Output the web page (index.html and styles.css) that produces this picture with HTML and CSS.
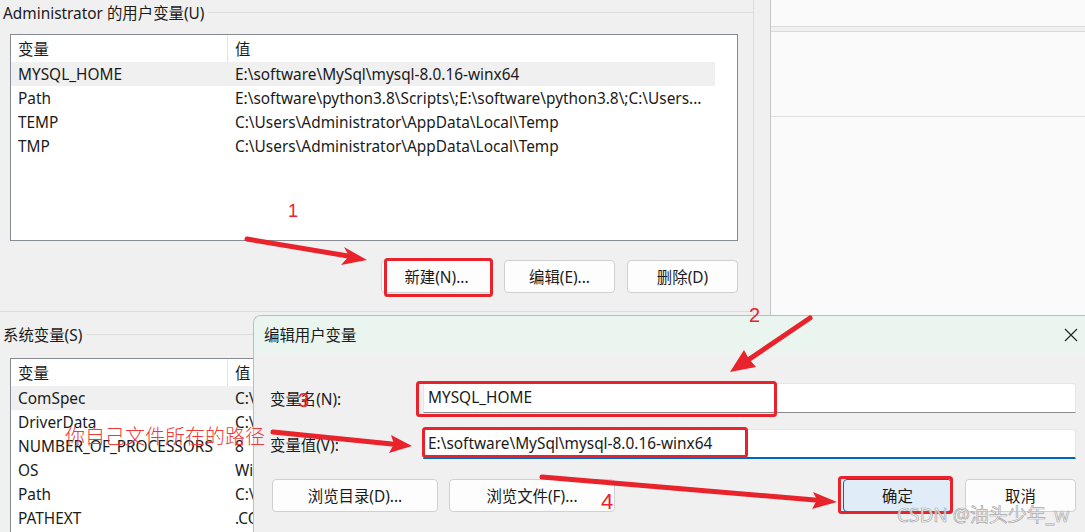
FILE: index.html
```html
<!DOCTYPE html>
<html lang="zh-CN">
<head>
    <meta charset="UTF-8">
    <title>环境变量</title>
    <link rel="stylesheet" href="styles.css">
</head>
<body>
<div class="screen">

    <div class="env">
        <section class="group user">
            <div class="legend"><span>Administrator 的用户变量(U)</span><i></i></div>
            <div class="list">
                <div class="row head"><div class="c1">变量</div><div class="c2">值</div></div>
                <div class="row sel"><div class="c1">MYSQL_HOME</div><div class="c2">E:\software\MySql\mysql-8.0.16-winx64</div></div>
                <div class="row"><div class="c1">Path</div><div class="c2">E:\software\python3.8\Scripts\;E:\software\python3.8\;C:\Users...</div></div>
                <div class="row"><div class="c1">TEMP</div><div class="c2">C:\Users\Administrator\AppData\Local\Temp</div></div>
                <div class="row"><div class="c1">TMP</div><div class="c2">C:\Users\Administrator\AppData\Local\Temp</div></div>
            </div>
            <div class="btns">
                <button class="btn">新建(N)...</button>
                <button class="btn">编辑(E)...</button>
                <button class="btn">删除(D)</button>
            </div>
        </section>

        <section class="group sys">
            <div class="legend"><span>系统变量(S)</span><i></i></div>
            <div class="list">
                <div class="row head"><div class="c1">变量</div><div class="c2">值</div></div>
                <div class="row sel"><div class="c1">ComSpec</div><div class="c2">C:\</div></div>
                <div class="row"><div class="c1">DriverData</div><div class="c2">C:\</div></div>
                <div class="row"><div class="c1">NUMBER_OF_PROCESSORS</div><div class="c2">8</div></div>
                <div class="row"><div class="c1">OS</div><div class="c2">Wi</div></div>
                <div class="row"><div class="c1">Path</div><div class="c2">C:\</div></div>
                <div class="row"><div class="c1">PATHEXT</div><div class="c2">.CO</div></div>
            </div>
        </section>
    </div>

    <div class="side">
        <div class="side-top"></div>
        <div class="side-band"></div>
        <div class="side-block"></div>
    </div>

    <!-- 编辑用户变量 弹窗 -->
    <div class="dialog">
        <div class="titlebar">
            <span>编辑用户变量</span>
            <svg class="close" width="14" height="14" viewBox="0 0 14 14">
                <path d="M1 1 L13 13 M13 1 L1 13" stroke="#222" stroke-width="1.1" fill="none"/>
            </svg>
        </div>
        <div class="dlg-body">
            <div class="field">
                <label>变量名(N):</label>
                <div class="input">MYSQL_HOME</div>
            </div>
            <div class="field">
                <label>变量值(V):</label>
                <div class="input focus">E:\software\MySql\mysql-8.0.16-winx64</div>
            </div>
            <div class="dlg-btns">
                <button class="btn wide">浏览目录(D)...</button>
                <button class="btn wide">浏览文件(F)...</button>
                <span class="spacer"></span>
                <button class="btn ok">确定</button>
                <button class="btn">取消</button>
            </div>
        </div>
    </div>

    <!-- 红色标注 -->
    <svg class="marks" width="1085" height="532" viewBox="0 0 1085 532">
        <g stroke="#e8232b" stroke-width="3" fill="none">
            <rect x="385.5" y="259.5" width="106" height="36" rx="2"/>
            <rect x="417.5" y="382.5" width="358" height="33" rx="2"/>
            <rect x="423.5" y="428.5" width="323" height="28" rx="2"/>
            <rect x="839.5" y="477.5" width="112" height="35" rx="2"/>
        </g>
        <g stroke="#e8232b" stroke-width="5" stroke-linecap="round" fill="none">
            <line x1="247" y1="239" x2="348" y2="256"/>
            <line x1="810" y1="318" x2="748" y2="360"/>
            <line x1="273" y1="432" x2="392" y2="444"/>
            <line x1="542" y1="477" x2="815" y2="500"/>
        </g>
        <g fill="#e8232b">
            <polygon points="367,260 344,247 349,256 341,265"/>
            <polygon points="730,372 744,350 749,359 756,367"/>
            <polygon points="412,446 391,435 394,444 389,453"/>
            <polygon points="837,502 813,492 817,500 812,509"/>
        </g>
    </svg>

    <span class="note n1">1</span>
    <span class="note n2">2</span>
    <span class="note n3">3</span>
    <span class="note n4">4</span>
    <span class="note path">你自己文件所在的路径</span>
    <span class="watermark">CSDN @油头少年_w</span>
</div>
</body>
</html>
```

FILE: styles.css
```css
body {
    margin: 0;
    font-family: "Noto Sans", "Noto Sans CJK SC", sans-serif;
    font-size: 15.4px;
    color: #1a1a1a;
    background-color: #f0f0f0;
}

.screen {
    position: relative;
    width: 1085px;
    height: 532px;
    overflow: hidden;
    display: flex;
}

/* 左边：环境变量窗口 */
.env {
    width: 770px;
    flex: none;
}

.group {
    margin-right: 16px;
    padding-left: 10px;
    border-right: 1px solid #dcdcdc;
}

.user {
    height: 311px;
    border-bottom: 1px solid #dcdcdc;
}

.sys {
    padding-top: 10px;
    height: 300px;
}

.legend {
    display: flex;
    align-items: center;
    height: 24px;
    margin-left: -7px;
}

.legend span {
    padding-right: 4px;
    white-space: nowrap;
}

.legend i {
    flex: 1;
    border-top: 1px solid #dcdcdc;
}

.list {
    margin-top: 10px;
    width: 726px;
    height: 205px;
    background: white;
    border: 1px solid #868a92;
}

.sys .list {
    margin-top: 12px;
    height: 260px;
}

.row {
    display: flex;
    width: 704px;
    height: 24px;
    line-height: 26px;
    white-space: nowrap;
}

.row.head {
    height: 27px;
    line-height: 29px;
}

.row.head .c1 {
    border-right: 1px solid #e5e5e5;
    width: 209px;
}

.row.sel {
    background-color: #f0f0f0;
}

.c1 {
    width: 210px;
    padding-left: 7px;
    overflow: hidden;
}

.c2 {
    flex: 1;
    padding-left: 7px;
    overflow: hidden;
}

.btns {
    display: flex;
    justify-content: flex-end;
    gap: 12px;
    width: 728px;
    margin-top: 19px;
}

.btn {
    font-family: inherit;
    font-size: 15.4px;
    color: #1a1a1a;
    width: 111px;
    height: 33px;
    background: #fdfdfd;
    border: 1px solid #d0d0d0;
    border-radius: 4px;
    padding: 0;
}

/* 右边：后面的窗口 */
.side {
    flex: 1;
    background-color: #fafafa;
    border-left: 1px solid #c6c6c6;
}

.side-top {
    height: 26px;
    border-bottom: 1px solid #dadada;
}

.side-band {
    height: 4px;
    background: #f0f0f0;
    border-bottom: 1px solid #dadada;
}

.side-block {
    height: 84px;
    border-bottom: 1px solid #e0e0e0;
}

/* 弹窗 */
.dialog {
    position: absolute;
    left: 253px;
    top: 315px;
    width: 832px;
    height: 230px;
    background-color: #f0f0f0;
    border: 1px solid #bdbdbd;
    border-right: none;
    border-radius: 8px 0 0 0;
    overflow: hidden;
}

.titlebar {
    display: flex;
    align-items: center;
    justify-content: space-between;
    height: 37px;
    padding: 0 8px 1px 10px;
    background-color: #e9f5ee;
}

.dlg-body {
    padding: 29px 10px 0 16px;
}

.field {
    display: flex;
    align-items: center;
    margin-bottom: 16px;
}

.field label {
    width: 153px;
}

.input {
    flex: 1;
    height: 28px;
    line-height: 28px;
    padding-left: 4px;
    background: white;
    border: 1px solid #e6e6e6;
    border-bottom-color: #8a8a8a;
    border-radius: 3px 3px 0 0;
}

.input.focus {
    height: 27px;
    border-bottom: 2px solid #0067c0;
}

.dlg-btns {
    display: flex;
    gap: 11px;
    margin-top: 20px;
    padding-left: 2px;
}

.dlg-btns .spacer {
    flex: 1;
}

.btn.wide {
    width: 166px;
}

.btn.ok {
    width: 109px;
    background-color: #e0ecf8;
    border-color: #0067c0;
    margin-right: 2px;
}

/* 标注 */
.marks {
    position: absolute;
    left: 0;
    top: 0;
    pointer-events: none;
}

.note {
    position: absolute;
    color: #e8232b;
    font-family: "Liberation Sans", "Noto Sans CJK SC", sans-serif;
    font-size: 20px;
    line-height: 20px;
}

.n1 { left: 288px; top: 201px; font-size: 18px; }
.n2 { left: 749px; top: 305px; }
.n3 { left: 298px; top: 390px; }
.n4 { left: 601px; top: 492px; font-size: 22px; }

.path {
    left: 65px;
    top: 426px;
    font-family: "Noto Sans CJK SC", sans-serif;
    font-weight: 300;
    color: #f03a3a;
}

.watermark {
    position: absolute;
    left: 897px;
    top: 503px;
    font-size: 19px;
    line-height: 24px;
    white-space: nowrap;
    color: rgba(255, 255, 255, 0.8);
    -webkit-text-stroke: 0.7px #a8a8a8;
}
```
